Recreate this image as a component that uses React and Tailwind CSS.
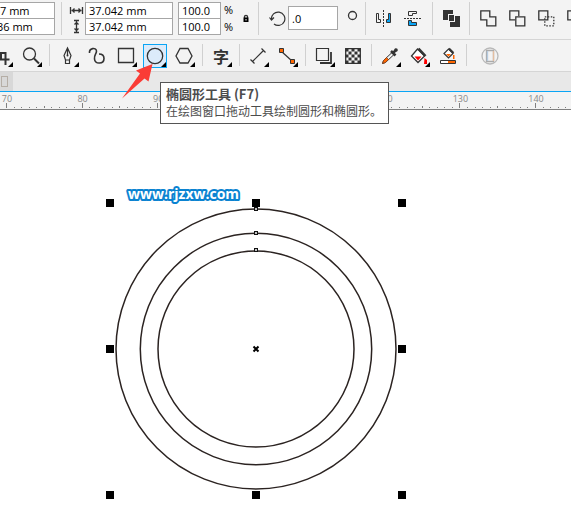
import React from "react";

const INPUT = "block w-full border border-[#a6a6a6] bg-white px-[3px] font-['Open_Sans','Noto_Sans',sans-serif] text-[11px] leading-none text-black outline-none";

const RULER_STEPS = Array.from({ length: 90 }, (_, i) => i);
const RULER_LABELS = [70, 80, 90, 100, 110, 120, 130, 140];
const PITCH = 75.57;

const HANDLES = [
  [110, 203], [256, 203], [402, 203],
  [110, 349], [402, 349],
  [110, 495], [256, 495], [402, 495],
];

const CHECKS = [0, 1, 2, 3, 4].flatMap((r) => [0, 1, 2, 3, 4].filter((c) => (r + c) % 2 === 0).map((c) => [c, r]));

function Icon({ size = 24, children }) {
  return (
    <svg width={size} height={size} viewBox={`0 0 ${size} ${size}`} fill="none" stroke="#333" strokeWidth="1.3" className="block shrink-0" aria-hidden="true">
      {children}
    </svg>
  );
}

function Tool({ label, active, flyout = true, children }) {
  return (
    <button
      type="button"
      aria-label={label}
      className={active ? "size-6 bg-[#dcebfa] outline -outline-offset-1 outline-[#0aa5f5]" : "size-6 hover:bg-[#e3effa]"}
    >
      <Icon>
        {children}
        {flyout && <path d="M23 18v5h-5z" fill="#000" stroke="none" />}
      </Icon>
    </button>
  );
}

function BarButton({ label, children }) {
  return (
    <button type="button" aria-label={label} className="size-[17px] shrink-0">
      <Icon size={17}>{children}</Icon>
    </button>
  );
}

function Divider() {
  return <div className="mx-1.5 h-[22px] w-px shrink-0 bg-[#d0d0d0]" />;
}

function BarDivider() {
  return <div className="h-[33px] w-px shrink-0 bg-[#d0d0d0]" />;
}

function PropertyBar() {
  return (
    <div className="flex h-10 items-center border-b border-[#d5d5d5] pb-[3px]">
      <div className="-ml-1 w-[59px] shrink-0">
        <input aria-label="X position" defaultValue="7 mm" className={`${INPUT} h-[17px]`} />
        <input aria-label="Y position" defaultValue="36 mm" className={`${INPUT} -mt-px h-[17px] pl-0!`} />
      </div>
      <div className="ml-1.5 flex"><BarDivider /></div>
      <div className="ml-[7px] flex w-4 shrink-0 flex-col items-center">
        <Icon size={16}>
          <path d="M1.500 5v7M13.500 5v7M2.500 8.500h10M5.500 6.500l-2 2 2 2M9.500 6.500l2 2-2 2" />
        </Icon>
        <Icon size={16}>
          <path d="M5 2.500h5M5 14.500h5M7.500 3v11M5.500 6.500l2-2 2 2M5.500 10.500l2 2 2-2" />
        </Icon>
      </div>
      <div className="w-22 shrink-0">
        <input aria-label="Width" defaultValue="37.042 mm" className={`${INPUT} h-[17px]`} />
        <input aria-label="Height" defaultValue="37.042 mm" className={`${INPUT} -mt-px h-[17px]`} />
      </div>
      <div className="ml-[5px] w-[43px] shrink-0">
        <input aria-label="Horizontal scale" defaultValue="100.0" className={`${INPUT} h-[17px]`} />
        <input aria-label="Vertical scale" defaultValue="100.0" className={`${INPUT} -mt-px h-[17px]`} />
      </div>
      <div className="ml-[3px] w-3 shrink-0 font-['Open_Sans',sans-serif] text-[11px] leading-[17px]">
        <div>%</div>
        <div>%</div>
      </div>
      <button type="button" aria-label="Lock ratio" className="ml-0.5 w-4 shrink-0">
        <Icon size={16}>
          <path d="M6.500 8V6.500c0-1.500 3-1.500 3 0V8" />
          <path d="M5.500 7.500h5v4.500h-5z" fill="#000" stroke="none" />
          <path d="M8 9v1.500" stroke="#fff" strokeWidth="1" />
        </Icon>
      </button>
      <div className="ml-1 flex"><BarDivider /></div>
      <div className="ml-[10px]">
        <Icon size={17}>
          <path d="M5 14A6.700 6.700 0 1 0 2.500 9.500M.5 7.500L2.500 10l2.500-2.500" strokeWidth="1.200" />
        </Icon>
      </div>
      <div className="ml-0.5 w-[50px] shrink-0">
        <input aria-label="Rotation" defaultValue=".0" className={`${INPUT} h-6`} />
      </div>
      <div className="-mt-1.5 ml-[6px]">
        <Icon size={17}><circle cx="8.500" cy="8.500" r="4" /></Icon>
      </div>
      <div className="ml-1 flex"><BarDivider /></div>
      <div className="ml-[9px] flex gap-3">
        <BarButton label="Mirror horizontally">
          <path d="M1.500 3.500h2v6h2v3h-4z" strokeWidth="1" />
          <path d="M8.500 0v17" strokeWidth="1" strokeDasharray="2 1" />
          <path d="M15.500 3.500h-2v6h-2v3h4z" fill="#0aa5f5" strokeWidth="1" />
        </BarButton>
        <BarButton label="Mirror vertically">
          <path d="M12.500 1.500h-8v4h4v-2h4z" strokeWidth="1" />
          <path d="M0 8.500h17" strokeWidth="1" strokeDasharray="2 1" />
          <path d="M12.500 15.500h-8v-5h3v2h5z" fill="#0aa5f5" strokeWidth="1" />
        </BarButton>
      </div>
      <div className="ml-[11px] flex"><BarDivider /></div>
      <div className="ml-[10px] flex">
        <BarButton label="Combine">
          <path d="M0 0h10v4H5v6H0zM12 6h5v11H7v-5h5zM6 5h5v6H6z" fill="#333" stroke="none" />
        </BarButton>
      </div>
      <div className="ml-[9px] flex"><BarDivider /></div>
      <div className="ml-[10px] flex gap-3">
        <BarButton label="Weld"><path d="M.8.8h9v6h6v9h-9v-6h-6z" /></BarButton>
        <BarButton label="Trim"><path d="M9.800 6V.8h-9v9H6M6.800 6.800h9v9h-9z" /></BarButton>
        <BarButton label="Intersect">
          <path d="M.8.8h9v9h-9z" />
          <path d="M6.800 6.800h9v9h-9z" strokeDasharray="1.500 1.500" />
        </BarButton>
        <BarButton label="Simplify"><path d="M9.800 6V.8h-9v9H6M6.800 6.800h9v9h-9z" /></BarButton>
      </div>
    </div>
  );
}

function Tooltip() {
  return (
    <div role="tooltip" className="absolute top-[38px] left-[17px] z-10 border border-[#555] bg-white pt-0.5 pr-1.5 pb-1 pl-[5px] font-['Noto_Sans_CJK_SC',sans-serif] text-xs leading-[17px] whitespace-nowrap text-[#4c4c4c]">
      <strong className="block text-[13px]">椭圆形工具 (F7)</strong>
      <p>在绘图窗口拖动工具绘制圆形和椭圆形。</p>
    </div>
  );
}

function Toolbox() {
  return (
    <div className="flex h-8 items-start border-b border-[#d5d5d5] pt-1">
      <div className="-ml-[10px] flex gap-[5px]">
        <Tool label="Crop"><path d="M5 9h10.500v12M5 15.500h14.500M11 9v6" strokeWidth="2" /></Tool>
        <Tool label="Zoom">
          <circle cx="10.500" cy="10" r="6" />
          <path d="M15 14.500l5 5" strokeWidth="2" />
        </Tool>
      </div>
      <Divider />
      <div className="flex gap-[5px]">
        <Tool label="Pen">
          <path d="M9.500 16h4l1.500-4.500L11.500 4 8 11.500zM9.500 16v3.500h4V16M11.500 4v7" strokeWidth="1.200" />
          <circle cx="11.500" cy="11.500" r="1" fill="#333" stroke="none" />
        </Tool>
        <Tool label="Artistic media" flyout={false}>
          <path d="M4.500 9C4 4 11 3 11.500 7c0 3-2.500 4-2 8 .5 5.500 9.500 5.500 9.500-.5 0-3-2-4.500-5-4.500" strokeWidth="1.600" />
        </Tool>
        <Tool label="Rectangle"><path d="M4.500 4.500h15v14h-15z" /></Tool>
        <div className="relative">
          <Tool label="Ellipse" active><circle cx="12" cy="12" r="7.700" /></Tool>
          <svg width="36" height="40" viewBox="0 0 36 40" className="pointer-events-none absolute top-[18px] -left-[22px] z-20" aria-hidden="true">
            <path d="M31.500 2L15 8.500l4 3L1 36.500l22.500-20 4 3z" fill="#fa3c36" />
          </svg>
          <Tooltip />
        </div>
        <Tool label="Polygon"><path d="M8 4.500h8l4 7.500-4 7H8l-4-7z" /></Tool>
      </div>
      <Divider />
      <button type="button" aria-label="Text" className="relative size-6 shrink-0 font-['Noto_Sans_CJK_SC',sans-serif] text-base leading-6 font-bold text-[#333]">
        字
        <svg width="5" height="5" className="absolute right-px bottom-px" aria-hidden="true"><path d="M5 0v5H0z" /></svg>
      </button>
      <Divider />
      <div className="flex gap-[5px]">
        <Tool label="Dimension"><path d="M6.500 17.500L17.500 6.500M4.500 15.500l4 4M15.500 4.500l4 4" strokeWidth="1.200" /></Tool>
        <Tool label="Connector">
          <path d="M6 7l11 10" strokeWidth="1.200" />
          <path d="M4.500 4.500h4v4h-4zM15.500 15.500h4v4h-4z" fill="#ff6600" strokeWidth="1" />
        </Tool>
      </div>
      <Divider />
      <div className="flex gap-[5px]">
        <Tool label="Drop shadow">
          <path d="M4.500 4.500h12v12h-12z" strokeWidth="1.200" />
          <path d="M8 19h11V8" strokeWidth="1.800" />
        </Tool>
        <Tool label="Transparency" flyout={false}>
          <path d="M4.700 4.700h14.600v14.600H4.700z" />
          {CHECKS.map(([c, r]) => (
            <rect key={`${c}-${r}`} x={4.5 + c * 3} y={4.5 + r * 3} width="3" height="3" fill="#333" stroke="none" />
          ))}
        </Tool>
      </div>
      <Divider />
      <div className="flex gap-[5px]">
        <Tool label="Color eyedropper">
          <path d="M4.500 19.500l1-3 8.500-8 2 2-8.500 8z" strokeWidth="1" fill="#f3f3f3" />
          <path d="M4.500 19.500l1-3 3-3 2 2-3 3z" fill="#ff6600" stroke="#7a4020" strokeWidth=".8" />
          <path d="M13 7l4.500 4.500M15 9l3.500-3.500" strokeWidth="2.500" />
          <circle cx="18" cy="6" r="1.800" fill="#333" stroke="none" />
        </Tool>
        <Tool label="Interactive fill">
          <path d="M10.500 5l7 7-6.500 6.500L4.500 12z" fill="#fff" />
          <path d="M11.500 4.500l7 7.500" strokeWidth="2.500" />
          <path d="M7.500 12.500h7l-3.500 4zM17.500 14l2.500 2v4h-3z" fill="#f00" stroke="none" />
        </Tool>
        <Tool label="Smart fill" flyout={false}>
          <path d="M12.500 5l4.500 4.500-4.500 4.500L8 9.500z" fill="#fff" strokeWidth="1.200" />
          <path d="M13 4.500l4.500 4.500" strokeWidth="2" />
          <path d="M10 10h5l-2.500 2.500zM17 11h1.500v4H17z" fill="#ff6600" stroke="none" />
          <path d="M4.500 16.500h15v3h-15z" fill="#fff" strokeWidth="1" />
          <path d="M12 17h7v2h-7z" fill="#ff6600" stroke="none" />
        </Tool>
      </div>
      <Divider />
      <button type="button" aria-label="Customize" className="ml-[5px] size-6 shrink-0">
        <Icon>
          <circle cx="12" cy="12" r="8" stroke="#b8b8b8" />
          <path d="M8.500 6.500h7v11h-7z" stroke="#aaa" fill="#f3f3f3" />
          <path d="M9.500 7v10" stroke="#b5cbe0" />
          <path d="M15.500 7v10" stroke="#e4bea0" />
        </Icon>
      </button>
    </div>
  );
}

function Ruler() {
  return (
    <svg width="100%" height="18" className="block border-b border-[#808080] bg-[#f3f3f3] font-['Open_Sans',sans-serif] text-[9px]" aria-label="Ruler">
      {RULER_STEPS.map((i) => {
        const size = i % 10 === 0 ? 5 : i % 5 === 0 ? 2 : 1;
        return <rect key={i} x={Math.round(6 + (i * PITCH) / 10)} y={16 - size} width="1" height={size} fill="#808080" />;
      })}
      {RULER_LABELS.map((n, i) => (
        <text key={n} x={7 + i * PITCH} y="10" textAnchor="middle" fill="#888">{n}</text>
      ))}
    </svg>
  );
}

function Canvas() {
  return (
    <main className="relative flex-1 bg-white">
      <svg width="308" height="304" viewBox="102 197 308 304" className="absolute top-[87px] left-[102px]" aria-label="Three concentric circles">
        <g fill="none" stroke="#2b2321" strokeWidth="1.500">
          <circle cx="256" cy="349" r="140" />
          <circle cx="256" cy="349" r="115.700" />
          <circle cx="256" cy="349" r="98" />
        </g>
        {HANDLES.map(([x, y]) => (
          <rect key={`${x}-${y}`} x={x - 4} y={y - 4} width="8" height="8" fill="#000" />
        ))}
        {[209, 233, 250].map((y) => (
          <g key={y}>
            <rect x="254" y={y - 2} width="4" height="4" fill="#111" />
            <path d={`M255 ${y}h2M256 ${y - 1}v2`} stroke="#fff" strokeWidth="1" />
          </g>
        ))}
        <path d="M253.500 346.500l5 5M258.500 346.500l-5 5" stroke="#000" strokeWidth="2" />
      </svg>
      <svg width="134" height="24" className="absolute top-[73px] left-[122px]" aria-label="Watermark">
        <text
          x="6"
          y="16"
          className="font-['Open_Sans',sans-serif] text-[14px] font-bold"
          fill="#fff"
          stroke="#0b83d1"
          strokeWidth="4"
          strokeLinejoin="round"
          paintOrder="stroke"
        >
          www.rjzxw.com
        </text>
      </svg>
    </main>
  );
}

export default function App() {
  return (
    <div className="flex min-h-screen flex-col overflow-hidden bg-[#f3f3f3] text-black">
      <PropertyBar />
      <Toolbox />
      <div className="flex h-5 border-b border-[#0aa5f5] bg-[#e8e8e8]">
        <button type="button" aria-label="Document tab" className="flex w-[13px] items-center bg-[#d8d8d8] pl-px">
          <span className="h-[11px] w-[7px] border border-[#b5aea6]" />
        </button>
      </div>
      <Ruler />
      <Canvas />
    </div>
  );
}
